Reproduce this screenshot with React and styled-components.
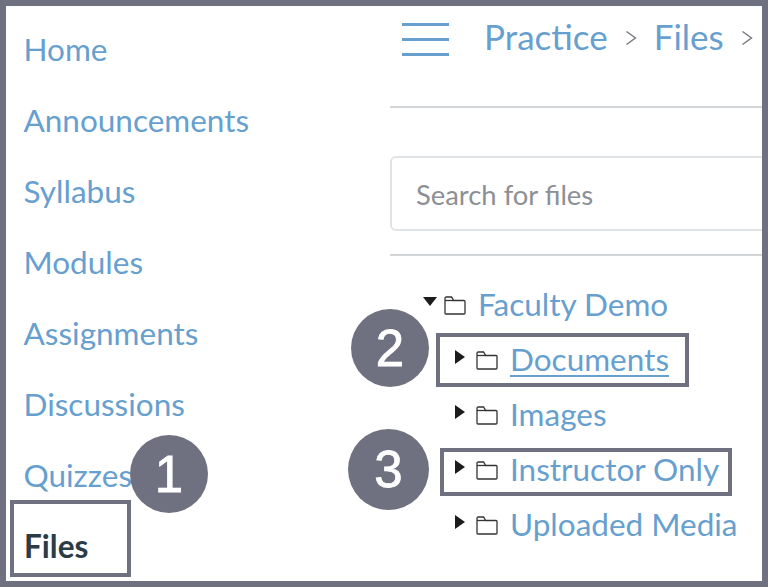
import styled, { createGlobalStyle } from "styled-components";

const GlobalStyle = createGlobalStyle`
  html, body {
    margin: 0;
    padding: 0;
    background: #ffffff;
  }
  * {
    box-sizing: border-box;
  }
`;

const navItems = ["Home", "Announcements", "Syllabus", "Modules", "Assignments", "Discussions", "Quizzes"];

const FolderIcon = () => (
  <FolderSvg viewBox="0 0 22 19" fill="none" stroke="#333" strokeWidth="1.3">
    <path d="M1 17V2.2C1 1.5 1.5 1 2.2 1H7.6L9.6 4.5H20C20.6 4.5 21 4.9 21 5.5V17C21 17.6 20.6 18 20 18H2C1.4 18 1 17.6 1 17Z" />
    <path d="M1 4.5H9.6" />
  </FolderSvg>
);

const ChevronIcon = () => (
  <ChevronSvg viewBox="0 0 12 16" fill="none" stroke="#73777c" strokeWidth="1.4">
    <path d="M1.5 1.5L10.5 8L1.5 14.5" />
  </ChevronSvg>
);

function TreeItem({ name, open, nested, underline, boxed }) {
  return (
    <TreeRow $nested={nested}>
      {boxed && <Highlight $boxed={boxed} />}
      <Arrow $open={open} />
      <FolderIcon />
      <TreeLink $underline={underline}>{name}</TreeLink>
    </TreeRow>
  );
}

export default function App() {
  return (
    <>
      <GlobalStyle />
      <Frame>
        <Sidebar>
          {navItems.map((item) => (
            <NavItem key={item}>{item}</NavItem>
          ))}
          <ActiveItem>Files</ActiveItem>
          <Badge $left={124} $top={429}>1</Badge>
        </Sidebar>
        <Main>
          <Header>
            <Hamburger>
              <span />
              <span />
              <span />
            </Hamburger>
            <Crumb>Practice</Crumb>
            <ChevronIcon />
            <Crumb>Files</Crumb>
            <ChevronIcon />
          </Header>
          <SearchRow>
            <SearchBox>Search for files</SearchBox>
          </SearchRow>
          <Tree>
            <TreeItem name="Faculty Demo" open />
            <TreeItem name="Documents" nested underline boxed="docs" />
            <TreeItem name="Images" nested />
            <TreeItem name="Instructor Only" nested boxed="instructor" />
            <TreeItem name="Uploaded Media" nested />
            <Badge $left={-39} $top={53}>2</Badge>
            <Badge $left={-42} $top={173} $size={81}>3</Badge>
          </Tree>
        </Main>
      </Frame>
    </>
  );
}

const Frame = styled.div`
  width: 768px;
  height: 587px;
  border: 6px solid #6f7180;
  display: flex;
  overflow: hidden;
  font-family: Lato, "Open Sans", sans-serif;
  background: #ffffff;
`;

const Sidebar = styled.nav`
  position: relative;
  width: 384px;
  flex: none;
  padding: 7px 0 0 17.5px;
`;

const NavItem = styled.div`
  height: 71px;
  display: flex;
  align-items: center;
  font-size: 31.5px;
  color: #679fcf;
`;

const ActiveItem = styled(NavItem)`
  position: relative;
  left: -13.5px;
  width: 121px;
  height: 77px;
  margin-top: -10px;
  padding: 14px 0 0 10px;
  border: 4px solid #6f7180;
  font-weight: 700;
  color: #2d3b45;
`;

const Badge = styled.div`
  position: absolute;
  left: ${(p) => p.$left}px;
  top: ${(p) => p.$top}px;
  width: ${(p) => p.$size || 78}px;
  height: ${(p) => p.$size || 78}px;
  border-radius: 50%;
  background: #6f7180;
  color: #ffffff;
  font-family: "Liberation Sans", Arial, sans-serif;
  font-size: 51px;
  -webkit-text-stroke: 0.8px #ffffff;
  display: flex;
  align-items: center;
  justify-content: center;
`;

const Main = styled.main`
  flex: 1;
  min-width: 0;
`;

const Header = styled.header`
  height: 102px;
  border-bottom: 2px solid #d3d6d9;
  display: flex;
  align-items: flex-start;
  padding: 9px 0 0 12px;
  white-space: nowrap;
`;

const Hamburger = styled.div`
  width: 47px;
  margin: 8px 35px 0 0;
  display: flex;
  flex-direction: column;
  gap: 12px;
  flex: none;

  span {
    display: block;
    height: 3px;
    background: #679fcf;
  }
`;

const Crumb = styled.span`
  font-size: 35px;
  line-height: 42px;
  color: #679fcf;
`;

const ChevronSvg = styled.svg`
  width: 12px;
  height: 16px;
  flex: none;
  margin: 15px 17px 0 17px;
`;

const SearchRow = styled.div`
  height: 148px;
  padding-top: 48px;
  border-bottom: 2px solid #d3d6d9;
`;

const SearchBox = styled.div`
  width: 420px;
  height: 75px;
  border: 2px solid #e1e4e7;
  border-radius: 6px;
  display: flex;
  align-items: center;
  padding: 2px 0 0 24px;
  font-size: 27.4px;
  color: #8c9095;
`;

const Tree = styled.div`
  position: relative;
  padding-top: 20px;
`;

const TreeRow = styled.div`
  position: relative;
  height: 55px;
  display: flex;
  align-items: center;
  padding-left: ${(p) => (p.$nested ? 65 : 33)}px;
`;

const Highlight = styled.div`
  position: absolute;
  left: ${(p) => (p.$boxed === "docs" ? 46 : 50)}px;
  top: ${(p) => (p.$boxed === "docs" ? 2 : 7)}px;
  width: ${(p) => (p.$boxed === "docs" ? 253 : 292)}px;
  height: ${(p) => (p.$boxed === "docs" ? 54 : 48)}px;
  border: 4px solid #6f7180;
`;

const Arrow = styled.span`
  width: 0;
  height: 0;
  flex: none;
  margin-top: -4px;
  ${(p) =>
    p.$open
      ? `border-left: 7px solid transparent;
         border-right: 7px solid transparent;
         border-top: 9px solid #1c1c1c;
         margin-right: 7px;`
      : `border-top: 7px solid transparent;
         border-bottom: 7px solid transparent;
         border-left: 10px solid #1c1c1c;
         margin-right: 11px;`}
`;

const FolderSvg = styled.svg`
  width: 22px;
  height: 19px;
  flex: none;
  margin: 4px 12px 0 0;
`;

const TreeLink = styled.span`
  position: relative;
  font-size: 31.5px;
  color: #679fcf;
  white-space: nowrap;
  text-decoration: ${(p) => (p.$underline ? "underline" : "none")};
  text-decoration-thickness: 2px;
  text-underline-offset: 4px;
`;
